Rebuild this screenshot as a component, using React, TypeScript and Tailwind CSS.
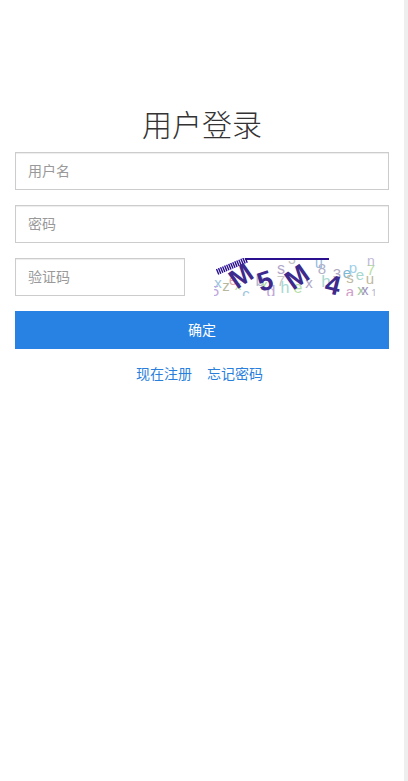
const fontStack = 'font-["Liberation_Sans","Noto_Sans_CJK_SC",sans-serif]'

// x, y are glyph centres inside the 161x38 captcha
const noise = [
  { c: 'x', x: 4, y: 24, s: 15, f: '#9ec6e0' },
  { c: 'z', x: 12, y: 27, s: 15, f: '#b8b8a0' },
  { c: 'e', x: 19, y: 22, s: 14, f: '#d8a8a8' },
  { c: 'x', x: 24, y: 27, s: 13, f: '#b0d8a0' },
  { c: '5', x: 1, y: 32, s: 15, f: '#c0a8e0' },
  { c: 'c', x: 32, y: 35, s: 15, f: '#9ec6e0' },
  { c: 'b', x: 46, y: 22, s: 16, f: '#b0b8d0' },
  { c: 'x', x: 50, y: 27, s: 14, f: '#b0d8a0' },
  { c: 'd', x: 57, y: 33, s: 16, f: '#c0a8d8' },
  { c: 's', x: 67, y: 10, s: 16, f: '#b0a8c8' },
  { c: '7', x: 67, y: 22, s: 15, f: '#c8c8c8' },
  { c: 'h', x: 71, y: 29, s: 16, f: '#a8d8d0' },
  { c: 'e', x: 84, y: 29, s: 16, f: '#b8e0a8' },
  { c: 'x', x: 95, y: 24, s: 15, f: '#b0a8c8' },
  { c: '3', x: 78, y: 1, s: 14, f: '#c0c0c0' },
  { c: 'u', x: 105, y: 5, s: 14, f: '#90b8e0' },
  { c: '8', x: 108, y: 10, s: 15, f: '#b0b0c8' },
  { c: 'h', x: 112, y: 23, s: 17, f: '#a8d8d0' },
  { c: '3', x: 123, y: 15, s: 15, f: '#b0a8c0' },
  { c: 'e', x: 133, y: 14, s: 15, f: '#80b8d8' },
  { c: 'p', x: 139, y: 9, s: 15, f: '#a0d0e8' },
  { c: 's', x: 136, y: 19, s: 15, f: '#c0b8a0' },
  { c: 'e', x: 146, y: 16, s: 15, f: '#a8d8d0' },
  { c: 'u', x: 156, y: 20, s: 15, f: '#c0b8a0' },
  { c: '7', x: 157, y: 11, s: 15, f: '#b8e0a0' },
  { c: 'n', x: 157, y: 3, s: 14, f: '#c0b8d8' },
  { c: 'a', x: 136, y: 33, s: 15, f: '#d0a0c8' },
  { c: 'x', x: 147, y: 31, s: 15, f: '#a0c8a0' },
  { c: 'x', x: 151, y: 32, s: 14, f: '#a090c0' },
  { c: '1', x: 160, y: 35, s: 10, f: '#b0b8d0' },
]

const marks = [
  { c: 'M', x: 27, y: 18, r: -35 },
  { c: '5', x: 51, y: 23, r: -18 },
  { c: 'M', x: 83, y: 19, r: -35 },
  { c: '4', x: 119, y: 27, r: 14 },
]

function Captcha() {
  return (
    <svg width="161" height="38" viewBox="0 0 161 38" className="block overflow-hidden">
      {noise.map((n, i) => (
        <text
          key={i}
          x={n.x}
          y={n.y}
          fontSize={n.s}
          fill={n.f}
          textAnchor="middle"
          dominantBaseline="central"
          fontFamily="Liberation Sans, sans-serif"
        >
          {n.c}
        </text>
      ))}
      <path d="M3 14 L33 1.5" fill="none" stroke="#2a0f8f" strokeWidth="6" strokeDasharray="1.4 0.8" />
      <path d="M31 1 H115" fill="none" stroke="#2a0f8f" strokeWidth="2" />
      {marks.map((m, i) => (
        <text
          key={i}
          x={m.x}
          y={m.y}
          fontSize="27"
          fontWeight="700"
          fill="#3d2a8c"
          textAnchor="middle"
          dominantBaseline="central"
          fontFamily="Liberation Sans, sans-serif"
          transform={`rotate(${m.r} ${m.x} ${m.y})`}
        >
          {m.c}
        </text>
      ))}
    </svg>
  )
}

export default function App() {
  return (
    <div className={`flex min-h-[781px] bg-white ${fontStack}`}>
      <div className="flex-1 min-w-0 px-[15px] pt-[105px]">
        <h1 className="text-center text-[30px] leading-[42px] h-[47px] font-light text-[#333333]">用户登录</h1>

        <input
          placeholder="用户名"
          className="block w-full h-[38px] px-3 border border-[#cccccc] bg-white text-sm outline-none shadow-[inset_0_1px_1px_rgba(0,0,0,0.075)] placeholder:text-[#999999]"
        />
        <input
          placeholder="密码"
          className="mt-[15px] block w-full h-[38px] px-3 border border-[#cccccc] bg-white text-sm outline-none shadow-[inset_0_1px_1px_rgba(0,0,0,0.075)] placeholder:text-[#999999]"
        />

        <div className="mt-[15px] flex items-start">
          <input
            placeholder="验证码"
            className="block w-[170px] h-[38px] px-3 border border-[#cccccc] bg-white text-sm outline-none shadow-[inset_0_1px_1px_rgba(0,0,0,0.075)] placeholder:text-[#999999]"
          />
          <div className="ml-[29px]">
            <Captcha />
          </div>
        </div>

        <button className="mt-[15px] block w-full h-[38px] bg-[#2882e4] text-sm text-white">确定</button>

        <div className="mt-4 flex justify-center gap-[15px] pr-[5px] text-sm leading-[18px] text-[#2a7fdc]">
          <a href="#">现在注册</a>
          <a href="#">忘记密码</a>
        </div>
      </div>
      <div className="w-[4px] shrink-0 bg-[#eeeeee]" />
    </div>
  )
}
